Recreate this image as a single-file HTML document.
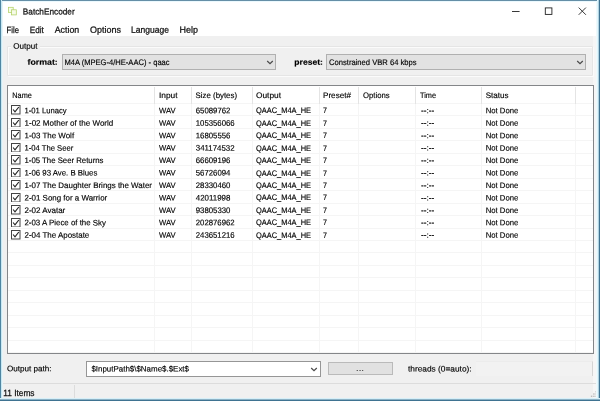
<!DOCTYPE html>
<html><head><meta charset="utf-8"><title>BatchEncoder</title>
<style>
html,body{margin:0;padding:0}
body{width:600px;height:401px;position:relative;overflow:hidden;background:#fff;font-family:'Liberation Sans', sans-serif;font-size:8.0px;line-height:12px}
div,span,svg{position:absolute;box-sizing:border-box}
.t{left:0;top:0;-webkit-text-stroke:0.15px;white-space:pre;transform-origin:0 0;display:inline-block}
.hl{left:0;width:585.5px;height:1px;background:#f5f5f5}
.vl{top:17.3px;height:250px;width:1px;background:#f5f5f5}
.vh{top:0.5px;height:17px;width:1px;background:#e4e4e4}
</style></head><body>
<div id="w" style="left:0;top:0;width:600px;height:401px;will-change:transform">
<!-- client -->
<div style="left:0;top:36.3px;width:600px;height:365px;background:#f0f0f0"></div>
<!-- right light strip -->
<div style="left:593px;top:36.3px;width:7px;height:365px;background:#f6f6f6"></div>
<!-- group box -->
<div style="left:7px;top:45.5px;width:586px;height:30px;border:1px solid #e5e5e5;border-radius:1px;box-shadow:inset 1px 1px 0 #fbfbfb, 1px 1px 0 #fbfbfb"></div>
<div style="left:11px;top:40px;width:28.5px;height:10px;background:#f0f0f0"></div>
<!-- combos -->
<div style="left:61.5px;top:54.2px;width:214.5px;height:15.6px;background:#e2e2e2;border:1px solid #b0b0b0"></div>
<svg style="left:265.5px;top:59.5px" width="8" height="5" viewBox="0 0 8 5"><path d="M1.2 1 L4 3.75 L6.8 1" fill="none" stroke="#4a4a4a" stroke-width="1.2"/></svg>
<div style="left:326.2px;top:54.2px;width:259.8px;height:15.6px;background:#e2e2e2;border:1px solid #b0b0b0"></div>
<svg style="left:575.5px;top:59.5px" width="8" height="5" viewBox="0 0 8 5"><path d="M1.2 1 L4 3.75 L6.8 1" fill="none" stroke="#4a4a4a" stroke-width="1.2"/></svg>
<!-- list -->
<div style="left:6.5px;top:85.2px;width:587.5px;height:269.3px;background:#fff;border:1px solid #848689"></div>
<div style="left:7.5px;top:86.2px;width:585.5px;height:267.3px;overflow:hidden">
<div class="hl" style="top:16.80px"></div>
<div class="hl" style="top:29.25px"></div>
<div class="hl" style="top:41.71px"></div>
<div class="hl" style="top:54.17px"></div>
<div class="hl" style="top:66.62px"></div>
<div class="hl" style="top:79.08px"></div>
<div class="hl" style="top:91.53px"></div>
<div class="hl" style="top:103.99px"></div>
<div class="hl" style="top:116.44px"></div>
<div class="hl" style="top:128.90px"></div>
<div class="hl" style="top:141.35px"></div>
<div class="hl" style="top:153.81px"></div>
<div class="hl" style="top:166.26px"></div>
<div class="hl" style="top:178.72px"></div>
<div class="hl" style="top:191.17px"></div>
<div class="hl" style="top:203.63px"></div>
<div class="hl" style="top:216.08px"></div>
<div class="hl" style="top:228.54px"></div>
<div class="hl" style="top:240.99px"></div>
<div class="hl" style="top:253.45px"></div>
<div class="hl" style="top:265.90px"></div>
<div class="vl" style="left:146.80px"></div>
<div class="vh" style="left:146.80px"></div>
<div class="vl" style="left:183.40px"></div>
<div class="vh" style="left:183.40px"></div>
<div class="vl" style="left:244.00px"></div>
<div class="vh" style="left:244.00px"></div>
<div class="vl" style="left:311.30px"></div>
<div class="vh" style="left:311.30px"></div>
<div class="vl" style="left:350.70px"></div>
<div class="vh" style="left:350.70px"></div>
<div class="vl" style="left:407.70px"></div>
<div class="vh" style="left:407.70px"></div>
<div class="vl" style="left:473.30px"></div>
<div class="vh" style="left:473.30px"></div>
<div class="vl" style="left:567.70px"></div>
<div class="vh" style="left:567.70px"></div>
</div>
<svg class="cb" style="left:11px;top:105.45px" width="9.5" height="9.5" viewBox="0 0 9.5 9.5"><rect x="0.5" y="0.5" width="8.5" height="8.5" fill="#fff" stroke="#444" stroke-width="1"/><path d="M2.1 4.5 L4 6.8 L7.8 2" fill="none" stroke="#222" stroke-width="1.15"/></svg>
<svg class="cb" style="left:11px;top:117.91px" width="9.5" height="9.5" viewBox="0 0 9.5 9.5"><rect x="0.5" y="0.5" width="8.5" height="8.5" fill="#fff" stroke="#444" stroke-width="1"/><path d="M2.1 4.5 L4 6.8 L7.8 2" fill="none" stroke="#222" stroke-width="1.15"/></svg>
<svg class="cb" style="left:11px;top:130.36px" width="9.5" height="9.5" viewBox="0 0 9.5 9.5"><rect x="0.5" y="0.5" width="8.5" height="8.5" fill="#fff" stroke="#444" stroke-width="1"/><path d="M2.1 4.5 L4 6.8 L7.8 2" fill="none" stroke="#222" stroke-width="1.15"/></svg>
<svg class="cb" style="left:11px;top:142.81px" width="9.5" height="9.5" viewBox="0 0 9.5 9.5"><rect x="0.5" y="0.5" width="8.5" height="8.5" fill="#fff" stroke="#444" stroke-width="1"/><path d="M2.1 4.5 L4 6.8 L7.8 2" fill="none" stroke="#222" stroke-width="1.15"/></svg>
<svg class="cb" style="left:11px;top:155.27px" width="9.5" height="9.5" viewBox="0 0 9.5 9.5"><rect x="0.5" y="0.5" width="8.5" height="8.5" fill="#fff" stroke="#444" stroke-width="1"/><path d="M2.1 4.5 L4 6.8 L7.8 2" fill="none" stroke="#222" stroke-width="1.15"/></svg>
<svg class="cb" style="left:11px;top:167.72px" width="9.5" height="9.5" viewBox="0 0 9.5 9.5"><rect x="0.5" y="0.5" width="8.5" height="8.5" fill="#fff" stroke="#444" stroke-width="1"/><path d="M2.1 4.5 L4 6.8 L7.8 2" fill="none" stroke="#222" stroke-width="1.15"/></svg>
<svg class="cb" style="left:11px;top:180.18px" width="9.5" height="9.5" viewBox="0 0 9.5 9.5"><rect x="0.5" y="0.5" width="8.5" height="8.5" fill="#fff" stroke="#444" stroke-width="1"/><path d="M2.1 4.5 L4 6.8 L7.8 2" fill="none" stroke="#222" stroke-width="1.15"/></svg>
<svg class="cb" style="left:11px;top:192.63px" width="9.5" height="9.5" viewBox="0 0 9.5 9.5"><rect x="0.5" y="0.5" width="8.5" height="8.5" fill="#fff" stroke="#444" stroke-width="1"/><path d="M2.1 4.5 L4 6.8 L7.8 2" fill="none" stroke="#222" stroke-width="1.15"/></svg>
<svg class="cb" style="left:11px;top:205.09px" width="9.5" height="9.5" viewBox="0 0 9.5 9.5"><rect x="0.5" y="0.5" width="8.5" height="8.5" fill="#fff" stroke="#444" stroke-width="1"/><path d="M2.1 4.5 L4 6.8 L7.8 2" fill="none" stroke="#222" stroke-width="1.15"/></svg>
<svg class="cb" style="left:11px;top:217.55px" width="9.5" height="9.5" viewBox="0 0 9.5 9.5"><rect x="0.5" y="0.5" width="8.5" height="8.5" fill="#fff" stroke="#444" stroke-width="1"/><path d="M2.1 4.5 L4 6.8 L7.8 2" fill="none" stroke="#222" stroke-width="1.15"/></svg>
<svg class="cb" style="left:11px;top:230.00px" width="9.5" height="9.5" viewBox="0 0 9.5 9.5"><rect x="0.5" y="0.5" width="8.5" height="8.5" fill="#fff" stroke="#444" stroke-width="1"/><path d="M2.1 4.5 L4 6.8 L7.8 2" fill="none" stroke="#222" stroke-width="1.15"/></svg>
<!-- bottom controls -->
<div style="left:86.2px;top:360.8px;width:234.4px;height:16px;background:#fff;border:1px solid #969696"></div>
<svg style="left:310px;top:366.5px" width="8" height="5" viewBox="0 0 8 5"><path d="M1.2 1 L4 3.75 L6.8 1" fill="none" stroke="#4a4a4a" stroke-width="1.2"/></svg>
<div style="left:328px;top:362.3px;width:64.5px;height:13px;background:#e1e1e1;border:1px solid #bababa"></div>
<div style="left:475.5px;top:361px;width:117.5px;height:14.5px;background:#f2f2f2;border-right:1px solid #d4d4d4;border-top:1px solid #ececec"></div>
<!-- status bar -->
<div style="left:0;top:383px;width:600px;height:1px;background:#dcdcdc"></div>
<div style="left:74px;top:385px;width:1px;height:14px;background:#dcdcdc"></div>
<!-- title icon -->
<svg style="left:8px;top:6px" width="10" height="10" viewBox="0 0 10 10"><rect x="0.6" y="1.3" width="4.6" height="5.1" fill="#f6fbe8" stroke="#b2d165" stroke-width="0.75"/><rect x="3.6" y="3.8" width="4.7" height="5.1" fill="#f6fbe8" stroke="#b2d165" stroke-width="0.75"/></svg>
<!-- caption buttons -->
<svg style="left:505px;top:3px" width="90" height="16" viewBox="0 0 90 16"><path d="M7 8.5 H14.6" stroke="#222" stroke-width="0.9"/><rect x="40.3" y="4.9" width="6.6" height="6.5" fill="none" stroke="#222" stroke-width="0.9"/><path d="M73.7 4.6 L80.9 11.8 M80.9 4.6 L73.7 11.8" stroke="#222" stroke-width="0.9"/></svg>
<!-- size grip -->
<svg style="left:590px;top:390px" width="8" height="8" viewBox="0 0 8 8"><g fill="#bcbcbc"><rect x="5.5" y="1" width="1.4" height="1.4"/><rect x="5.5" y="3.3" width="1.4" height="1.4"/><rect x="3.2" y="3.3" width="1.4" height="1.4"/><rect x="5.5" y="5.6" width="1.4" height="1.4"/><rect x="3.2" y="5.6" width="1.4" height="1.4"/><rect x="0.9" y="5.6" width="1.4" height="1.4"/></g></svg>
<span class="t" style="transform:translate(22.80px,5.45px) rotate(0.03deg) scaleX(0.9509);font-size:8.7px;-webkit-text-stroke:0.25px;color:#111">BatchEncoder</span>
<span class="t" style="transform:translate(6.60px,23.70px) rotate(0.03deg) scaleX(0.8543);font-size:9px;-webkit-text-stroke:0.25px;color:#111">File</span>
<span class="t" style="transform:translate(29.70px,23.70px) rotate(0.03deg) scaleX(0.9088);font-size:9px;-webkit-text-stroke:0.25px;color:#111">Edit</span>
<span class="t" style="transform:translate(54.75px,23.70px) rotate(0.03deg) scaleX(0.9774);font-size:9px;-webkit-text-stroke:0.25px;color:#111">Action</span>
<span class="t" style="transform:translate(90.00px,23.70px) rotate(0.03deg) scaleX(0.9990);font-size:9px;-webkit-text-stroke:0.25px;color:#111">Options</span>
<span class="t" style="transform:translate(131.00px,23.70px) rotate(0.03deg) scaleX(0.9489);font-size:9px;-webkit-text-stroke:0.25px;color:#111">Language</span>
<span class="t" style="transform:translate(179.50px,23.70px) rotate(0.03deg) scaleX(0.9992);font-size:9px;-webkit-text-stroke:0.25px;color:#111">Help</span>
<span class="t" style="transform:translate(13.20px,40.80px) rotate(0.03deg) scaleX(1.0118)">Output</span>
<span class="t" style="transform:translate(27.50px,56.70px) rotate(0.03deg) scaleX(1.0975);font-weight:bold">format:</span>
<span class="t" style="transform:translate(64.40px,56.90px) rotate(0.03deg) scaleX(0.9465)">M4A (MPEG-4/HE-AAC) - qaac</span>
<span class="t" style="transform:translate(294.30px,56.70px) rotate(0.03deg) scaleX(1.0754);font-weight:bold">preset:</span>
<span class="t" style="transform:translate(329.00px,56.90px) rotate(0.03deg) scaleX(0.9515)">Constrained VBR 64 kbps</span>
<span class="t" style="transform:translate(12.30px,90.00px) rotate(0.03deg) scaleX(0.9136)">Name</span>
<span class="t" style="transform:translate(159.00px,90.00px) rotate(0.03deg) scaleX(1.0451)">Input</span>
<span class="t" style="transform:translate(195.60px,90.00px) rotate(0.03deg) scaleX(0.9802)">Size (bytes)</span>
<span class="t" style="transform:translate(256.00px,90.00px) rotate(0.03deg) scaleX(1.0410)">Output</span>
<span class="t" style="transform:translate(323.00px,90.00px) rotate(0.03deg) scaleX(1.0153)">Preset#</span>
<span class="t" style="transform:translate(363.00px,90.00px) rotate(0.03deg) scaleX(0.9645)">Options</span>
<span class="t" style="transform:translate(420.00px,90.00px) rotate(0.03deg) scaleX(0.9151)">Time</span>
<span class="t" style="transform:translate(485.70px,90.00px) rotate(0.03deg) scaleX(1.0050)">Status</span>
<span class="t" style="transform:translate(24.50px,105.25px) rotate(0.03deg) scaleX(0.9584)">1-01 Lunacy</span>
<span class="t" style="transform:translate(159.00px,105.25px) rotate(0.03deg) scaleX(0.9571)">WAV</span>
<span class="t" style="transform:translate(195.80px,105.25px) rotate(0.03deg) scaleX(0.9721)">65089762</span>
<span class="t" style="transform:translate(256.00px,105.25px) rotate(0.03deg) scaleX(0.9300)">QAAC_M4A_HE</span>
<span class="t" style="transform:translate(323.00px,105.25px) rotate(0.03deg) scaleX(0.8982)">7</span>
<span class="t" style="transform:translate(421.00px,105.25px) rotate(0.03deg) scaleX(1.0395)">--:--</span>
<span class="t" style="transform:translate(485.70px,105.25px) rotate(0.03deg) scaleX(0.9646)">Not Done</span>
<span class="t" style="transform:translate(24.50px,117.70px) rotate(0.03deg) scaleX(1.0052)">1-02 Mother of the World</span>
<span class="t" style="transform:translate(159.00px,117.70px) rotate(0.03deg) scaleX(0.9571)">WAV</span>
<span class="t" style="transform:translate(195.80px,117.70px) rotate(0.03deg) scaleX(0.9689)">105356066</span>
<span class="t" style="transform:translate(256.00px,117.70px) rotate(0.03deg) scaleX(0.9300)">QAAC_M4A_HE</span>
<span class="t" style="transform:translate(323.00px,117.70px) rotate(0.03deg) scaleX(0.8982)">7</span>
<span class="t" style="transform:translate(421.00px,117.70px) rotate(0.03deg) scaleX(1.0395)">--:--</span>
<span class="t" style="transform:translate(485.70px,117.70px) rotate(0.03deg) scaleX(0.9646)">Not Done</span>
<span class="t" style="transform:translate(24.50px,130.16px) rotate(0.03deg) scaleX(0.9929)">1-03 The Wolf</span>
<span class="t" style="transform:translate(159.00px,130.16px) rotate(0.03deg) scaleX(0.9571)">WAV</span>
<span class="t" style="transform:translate(195.80px,130.16px) rotate(0.03deg) scaleX(0.9721)">16805556</span>
<span class="t" style="transform:translate(256.00px,130.16px) rotate(0.03deg) scaleX(0.9300)">QAAC_M4A_HE</span>
<span class="t" style="transform:translate(323.00px,130.16px) rotate(0.03deg) scaleX(0.8982)">7</span>
<span class="t" style="transform:translate(421.00px,130.16px) rotate(0.03deg) scaleX(1.0395)">--:--</span>
<span class="t" style="transform:translate(485.70px,130.16px) rotate(0.03deg) scaleX(0.9646)">Not Done</span>
<span class="t" style="transform:translate(24.50px,142.62px) rotate(0.03deg) scaleX(0.9569)">1-04 The Seer</span>
<span class="t" style="transform:translate(159.00px,142.62px) rotate(0.03deg) scaleX(0.9571)">WAV</span>
<span class="t" style="transform:translate(195.80px,142.62px) rotate(0.03deg) scaleX(0.9834)">341174532</span>
<span class="t" style="transform:translate(256.00px,142.62px) rotate(0.03deg) scaleX(0.9300)">QAAC_M4A_HE</span>
<span class="t" style="transform:translate(323.00px,142.62px) rotate(0.03deg) scaleX(0.8982)">7</span>
<span class="t" style="transform:translate(421.00px,142.62px) rotate(0.03deg) scaleX(1.0395)">--:--</span>
<span class="t" style="transform:translate(485.70px,142.62px) rotate(0.03deg) scaleX(0.9646)">Not Done</span>
<span class="t" style="transform:translate(24.50px,155.07px) rotate(0.03deg) scaleX(0.9725)">1-05 The Seer Returns</span>
<span class="t" style="transform:translate(159.00px,155.07px) rotate(0.03deg) scaleX(0.9571)">WAV</span>
<span class="t" style="transform:translate(195.80px,155.07px) rotate(0.03deg) scaleX(0.9721)">66609196</span>
<span class="t" style="transform:translate(256.00px,155.07px) rotate(0.03deg) scaleX(0.9300)">QAAC_M4A_HE</span>
<span class="t" style="transform:translate(323.00px,155.07px) rotate(0.03deg) scaleX(0.8982)">7</span>
<span class="t" style="transform:translate(421.00px,155.07px) rotate(0.03deg) scaleX(1.0395)">--:--</span>
<span class="t" style="transform:translate(485.70px,155.07px) rotate(0.03deg) scaleX(0.9646)">Not Done</span>
<span class="t" style="transform:translate(24.50px,167.53px) rotate(0.03deg) scaleX(0.9762)">1-06 93 Ave. B Blues</span>
<span class="t" style="transform:translate(159.00px,167.53px) rotate(0.03deg) scaleX(0.9571)">WAV</span>
<span class="t" style="transform:translate(195.80px,167.53px) rotate(0.03deg) scaleX(0.9721)">56726094</span>
<span class="t" style="transform:translate(256.00px,167.53px) rotate(0.03deg) scaleX(0.9300)">QAAC_M4A_HE</span>
<span class="t" style="transform:translate(323.00px,167.53px) rotate(0.03deg) scaleX(0.8982)">7</span>
<span class="t" style="transform:translate(421.00px,167.53px) rotate(0.03deg) scaleX(1.0395)">--:--</span>
<span class="t" style="transform:translate(485.70px,167.53px) rotate(0.03deg) scaleX(0.9646)">Not Done</span>
<span class="t" style="transform:translate(24.50px,179.98px) rotate(0.03deg) scaleX(0.9921)">1-07 The Daughter Brings the Water</span>
<span class="t" style="transform:translate(159.00px,179.98px) rotate(0.03deg) scaleX(0.9571)">WAV</span>
<span class="t" style="transform:translate(195.80px,179.98px) rotate(0.03deg) scaleX(0.9721)">28330460</span>
<span class="t" style="transform:translate(256.00px,179.98px) rotate(0.03deg) scaleX(0.9300)">QAAC_M4A_HE</span>
<span class="t" style="transform:translate(323.00px,179.98px) rotate(0.03deg) scaleX(0.8982)">7</span>
<span class="t" style="transform:translate(421.00px,179.98px) rotate(0.03deg) scaleX(1.0395)">--:--</span>
<span class="t" style="transform:translate(485.70px,179.98px) rotate(0.03deg) scaleX(0.9646)">Not Done</span>
<span class="t" style="transform:translate(24.50px,192.44px) rotate(0.03deg) scaleX(0.9928)">2-01 Song for a Warrior</span>
<span class="t" style="transform:translate(159.00px,192.44px) rotate(0.03deg) scaleX(0.9571)">WAV</span>
<span class="t" style="transform:translate(195.80px,192.44px) rotate(0.03deg) scaleX(0.9886)">42011998</span>
<span class="t" style="transform:translate(256.00px,192.44px) rotate(0.03deg) scaleX(0.9300)">QAAC_M4A_HE</span>
<span class="t" style="transform:translate(323.00px,192.44px) rotate(0.03deg) scaleX(0.8982)">7</span>
<span class="t" style="transform:translate(421.00px,192.44px) rotate(0.03deg) scaleX(1.0395)">--:--</span>
<span class="t" style="transform:translate(485.70px,192.44px) rotate(0.03deg) scaleX(0.9646)">Not Done</span>
<span class="t" style="transform:translate(24.50px,204.89px) rotate(0.03deg) scaleX(1.0005)">2-02 Avatar</span>
<span class="t" style="transform:translate(159.00px,204.89px) rotate(0.03deg) scaleX(0.9571)">WAV</span>
<span class="t" style="transform:translate(195.80px,204.89px) rotate(0.03deg) scaleX(0.9721)">93805330</span>
<span class="t" style="transform:translate(256.00px,204.89px) rotate(0.03deg) scaleX(0.9300)">QAAC_M4A_HE</span>
<span class="t" style="transform:translate(323.00px,204.89px) rotate(0.03deg) scaleX(0.8982)">7</span>
<span class="t" style="transform:translate(421.00px,204.89px) rotate(0.03deg) scaleX(1.0395)">--:--</span>
<span class="t" style="transform:translate(485.70px,204.89px) rotate(0.03deg) scaleX(0.9646)">Not Done</span>
<span class="t" style="transform:translate(24.50px,217.34px) rotate(0.03deg) scaleX(0.9841)">2-03 A Piece of the Sky</span>
<span class="t" style="transform:translate(159.00px,217.34px) rotate(0.03deg) scaleX(0.9571)">WAV</span>
<span class="t" style="transform:translate(195.80px,217.34px) rotate(0.03deg) scaleX(0.9689)">202876962</span>
<span class="t" style="transform:translate(256.00px,217.34px) rotate(0.03deg) scaleX(0.9300)">QAAC_M4A_HE</span>
<span class="t" style="transform:translate(323.00px,217.34px) rotate(0.03deg) scaleX(0.8982)">7</span>
<span class="t" style="transform:translate(421.00px,217.34px) rotate(0.03deg) scaleX(1.0395)">--:--</span>
<span class="t" style="transform:translate(485.70px,217.34px) rotate(0.03deg) scaleX(0.9646)">Not Done</span>
<span class="t" style="transform:translate(24.50px,229.80px) rotate(0.03deg) scaleX(0.9933)">2-04 The Apostate</span>
<span class="t" style="transform:translate(159.00px,229.80px) rotate(0.03deg) scaleX(0.9571)">WAV</span>
<span class="t" style="transform:translate(195.80px,229.80px) rotate(0.03deg) scaleX(0.9689)">243651216</span>
<span class="t" style="transform:translate(256.00px,229.80px) rotate(0.03deg) scaleX(0.9300)">QAAC_M4A_HE</span>
<span class="t" style="transform:translate(323.00px,229.80px) rotate(0.03deg) scaleX(0.8982)">7</span>
<span class="t" style="transform:translate(421.00px,229.80px) rotate(0.03deg) scaleX(1.0395)">--:--</span>
<span class="t" style="transform:translate(485.70px,229.80px) rotate(0.03deg) scaleX(0.9646)">Not Done</span>
<span class="t" style="transform:translate(7.00px,363.30px) rotate(0.03deg) scaleX(1.0129)">Output path:</span>
<span class="t" style="transform:translate(91.40px,363.50px) rotate(0.03deg) scaleX(0.9929)">$InputPath$\$Name$.$Ext$</span>
<span class="t" style="transform:translate(356.00px,363.00px) rotate(0.03deg) scaleX(1.1991);color:#333">...</span>
<span class="t" style="transform:translate(408.00px,363.40px) rotate(0.03deg) scaleX(1.0400)">threads (0=auto):</span>
<span class="t" style="transform:translate(3.20px,386.50px) rotate(0.03deg) scaleX(0.9244);font-size:9px;-webkit-text-stroke:0.25px;color:#111">11 Items</span>
<!-- window borders -->
<div style="left:0;top:0;width:600px;height:1px;background:#658fa7"></div>
<div style="left:0;top:1px;width:600px;height:1px;background:#ebf9fe"></div>
<div style="left:1px;top:0;width:1px;height:401px;background:#c8e8f3"></div>
<div style="left:2px;top:1px;width:1px;height:399px;background:#e8f4f8"></div>
<div style="left:0;top:0;width:1px;height:401px;background:#4f86a2"></div>
<div style="left:596px;top:1px;width:1px;height:399px;background:#f0f9fb"></div>
<div style="left:597px;top:0;width:1px;height:401px;background:#dff6fd"></div>
<div style="left:598px;top:0;width:1px;height:401px;background:#b1d1e0"></div>
<div style="left:599px;top:0;width:1px;height:401px;background:#3f7391"></div>
<div style="left:0;top:398px;width:600px;height:1px;background:#d7eff8"></div>
<div style="left:0;top:399px;width:600px;height:1px;background:#8bb2c6"></div>
<div style="left:0;top:400px;width:600px;height:1px;background:#3f7391"></div>
</div>
</body></html>
